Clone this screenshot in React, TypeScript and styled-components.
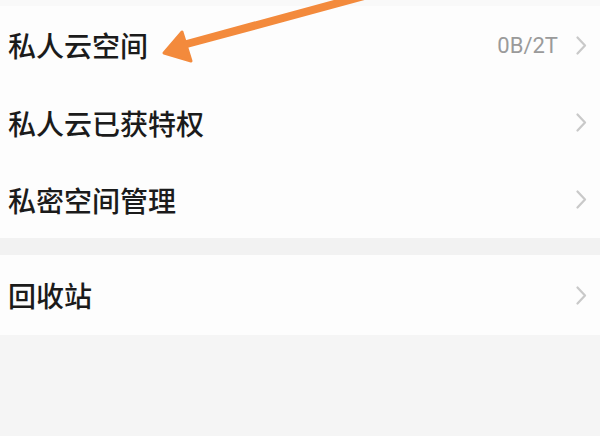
import React from 'react';
import styled, { createGlobalStyle } from 'styled-components';

const GlobalStyle = createGlobalStyle`
  html, body {
    margin: 0;
    padding: 0;
    background: #f5f5f5;
  }
  #root {
    width: 600px;
    height: 436px;
    overflow: hidden;
  }
`;

const Screen = styled.div`
  position: relative;
  width: 600px;
  height: 436px;
  background: #f5f5f5;
  font-family: "Noto Sans CJK SC", "Noto Sans", sans-serif;
  display: flex;
  flex-direction: column;
`;

const TopStrip = styled.div`
  height: 6px;
  background: #f9f9f9;
`;

const Group = styled.div`
  background: #fdfdfd;
  display: flex;
  flex-direction: column;
`;

const Gap = styled.div`
  height: 17px;
  background: #f2f2f2;
`;

const Row = styled.div<{ $h: number }>`
  height: ${(p) => p.$h}px;
  display: flex;
  align-items: center;
  padding: 0 13px 0 8px;
`;

const Label = styled.span`
  flex: 1;
  font-size: 28px;
  font-weight: 500;
  color: #1b1b1b;
`;

const Value = styled.span`
  font-family: Roboto, "Liberation Sans", sans-serif;
  font-size: 22px;
  color: #9a9a9a;
  margin-right: 18px;
`;

const Chevron = () => (
  <svg width="11" height="19" viewBox="0 0 11 19">
    <path d="M1.5 1.5 L9 9.5 L1.5 17.5" fill="none" stroke="#c9c9c9" strokeWidth="2.2" strokeLinecap="round" strokeLinejoin="round" />
  </svg>
);

const ArrowLayer = styled.svg`
  position: absolute;
  left: 0;
  top: 0;
  pointer-events: none;
`;

const items = [
  { label: '私人云空间', value: '0B/2T', h: 78 },
  { label: '私人云已获特权', h: 77 },
  { label: '私密空间管理', h: 77 },
];

export default function App() {
  return (
    <>
      <GlobalStyle />
      <Screen>
        <TopStrip />
        <Group>
          {items.map((it) => (
            <Row key={it.label} $h={it.h}>
              <Label>{it.label}</Label>
              {it.value && <Value>{it.value}</Value>}
              <Chevron />
            </Row>
          ))}
        </Group>
        <Gap />
        <Group>
          <Row $h={80}>
            <Label>回收站</Label>
            <Chevron />
          </Row>
        </Group>
        <ArrowLayer width="600" height="80" viewBox="0 0 600 80">
          <line x1="183" y1="45" x2="364" y2="-4" stroke="#f38a3c" strokeWidth="8" strokeLinecap="round" />
          <polygon points="164,53 182,32 191,61" fill="#f38a3c" stroke="#f38a3c" strokeWidth="3" strokeLinejoin="round" />
        </ArrowLayer>
      </Screen>
    </>
  );
}
